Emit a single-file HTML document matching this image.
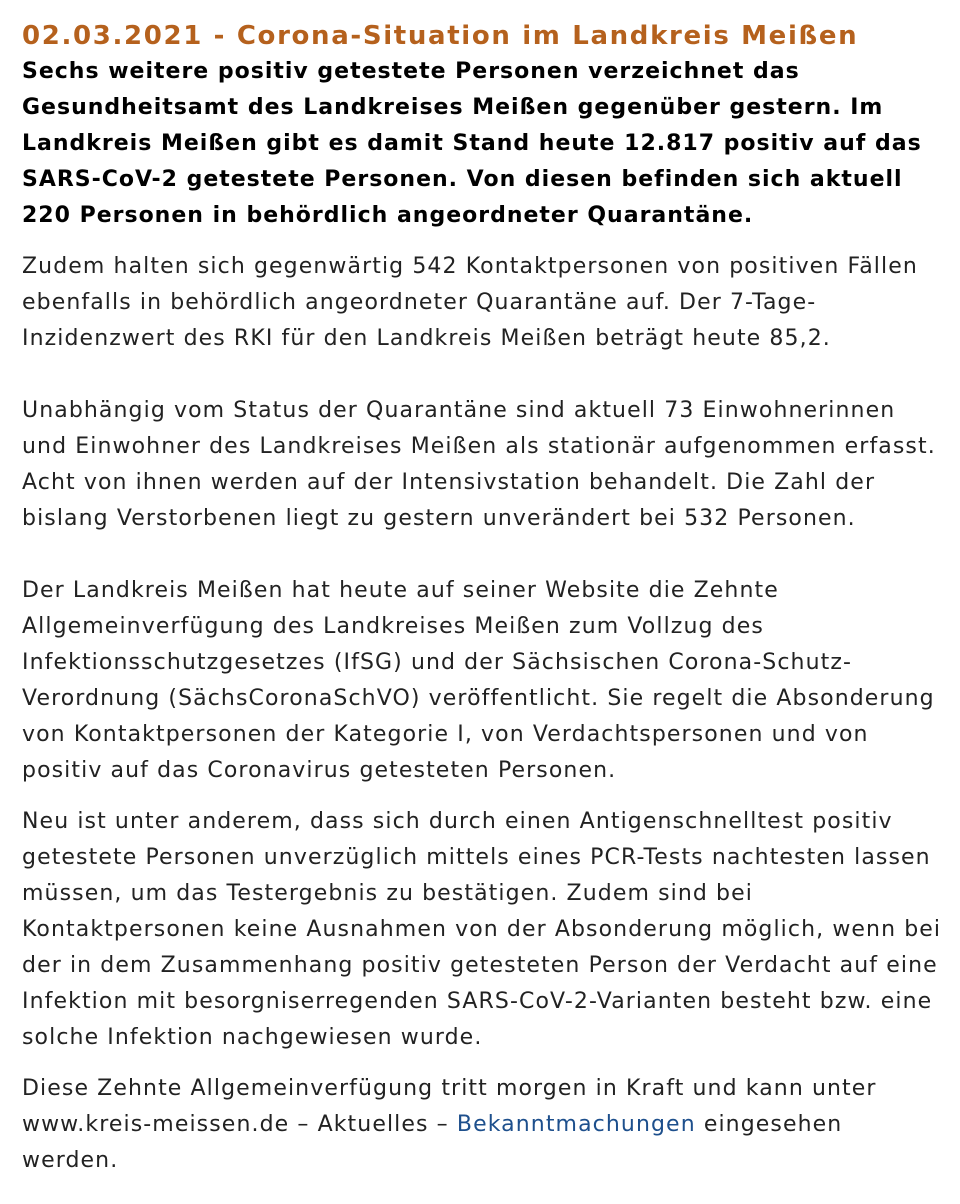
<!DOCTYPE html>
<html><head><meta charset="utf-8"><style>
body{margin:0;background:#fff;width:960px;height:1204px;overflow:hidden}
.w{padding:18px 0 0 22px;font-family:"DejaVu Sans","Verdana","Liberation Sans",sans-serif;color:#222;white-space:nowrap}
h1{font-size:26px;font-weight:bold;color:#b5611d;margin:0;line-height:36px;letter-spacing:1.65px}
p{font-size:22px;line-height:36px;margin:0 0 15px 0;letter-spacing:1.1px}
p.b{font-weight:bold;color:#000;letter-spacing:1px;margin-top:0;margin-bottom:15px}
a{color:#1d4f8c;text-decoration:none}
</style></head><body><div class="w">
<h1>02.03.2021 - Corona-Situation im Landkreis Meißen</h1>
<p class="b">Sechs weitere positiv getestete Personen verzeichnet das<br>Gesundheitsamt des Landkreises Meißen gegenüber gestern. Im<br>Landkreis Meißen gibt es damit Stand heute 12.817 positiv auf das<br>SARS-CoV-2 getestete Personen. Von diesen befinden sich aktuell<br>220 Personen in behördlich angeordneter Quarantäne.</p>
<p>Zudem halten sich gegenwärtig 542 Kontaktpersonen von positiven Fällen<br>ebenfalls in behördlich angeordneter Quarantäne auf. Der 7-Tage-<br>Inzidenzwert des RKI für den Landkreis Meißen beträgt heute 85,2.<br><br>Unabhängig vom Status der Quarantäne sind aktuell 73 Einwohnerinnen<br>und Einwohner des Landkreises Meißen als stationär aufgenommen erfasst.<br>Acht von ihnen werden auf der Intensivstation behandelt. Die Zahl der<br>bislang Verstorbenen liegt zu gestern unverändert bei 532 Personen.<br><br>Der Landkreis Meißen hat heute auf seiner Website die Zehnte<br>Allgemeinverfügung des Landkreises Meißen zum Vollzug des<br>Infektionsschutzgesetzes (IfSG) und der Sächsischen Corona-Schutz-<br>Verordnung (SächsCoronaSchVO) veröffentlicht. Sie regelt die Absonderung<br>von Kontaktpersonen der Kategorie I, von Verdachtspersonen und von<br>positiv auf das Coronavirus getesteten Personen.</p>
<p>Neu ist unter anderem, dass sich durch einen Antigenschnelltest positiv<br>getestete Personen unverzüglich mittels eines PCR-Tests nachtesten lassen<br>müssen, um das Testergebnis zu bestätigen. Zudem sind bei<br>Kontaktpersonen keine Ausnahmen von der Absonderung möglich, wenn bei<br>der in dem Zusammenhang positiv getesteten Person der Verdacht auf eine<br>Infektion mit besorgniserregenden SARS-CoV-2-Varianten besteht bzw. eine<br>solche Infektion nachgewiesen wurde.</p>
<p>Diese Zehnte Allgemeinverfügung tritt morgen in Kraft und kann unter<br>www.kreis-meissen.de – Aktuelles – <a>Bekanntmachungen</a> eingesehen<br>werden.</p>
</div></body></html>
